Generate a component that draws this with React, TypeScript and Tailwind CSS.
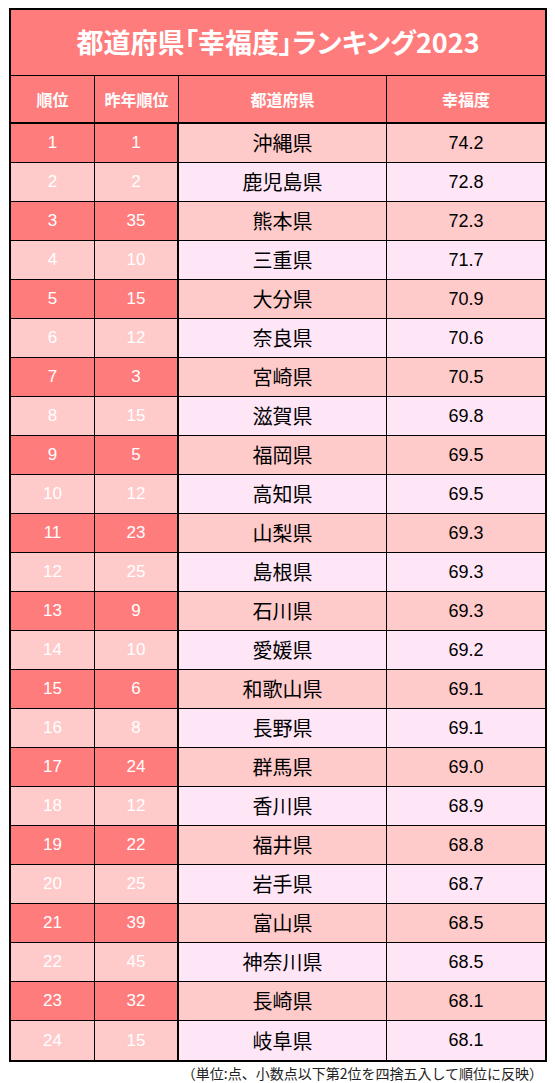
import React from 'react';

const rows: [number, number, string, string][] = [
    [1, 1, '沖縄県', '74.2'],
    [2, 2, '鹿児島県', '72.8'],
    [3, 35, '熊本県', '72.3'],
    [4, 10, '三重県', '71.7'],
    [5, 15, '大分県', '70.9'],
    [6, 12, '奈良県', '70.6'],
    [7, 3, '宮崎県', '70.5'],
    [8, 15, '滋賀県', '69.8'],
    [9, 5, '福岡県', '69.5'],
    [10, 12, '高知県', '69.5'],
    [11, 23, '山梨県', '69.3'],
    [12, 25, '島根県', '69.3'],
    [13, 9, '石川県', '69.3'],
    [14, 10, '愛媛県', '69.2'],
    [15, 6, '和歌山県', '69.1'],
    [16, 8, '長野県', '69.1'],
    [17, 24, '群馬県', '69.0'],
    [18, 12, '香川県', '68.9'],
    [19, 22, '福井県', '68.8'],
    [20, 25, '岩手県', '68.7'],
    [21, 39, '富山県', '68.5'],
    [22, 45, '神奈川県', '68.5'],
    [23, 32, '長崎県', '68.1'],
    [24, 15, '岐阜県', '68.1'],
];

const jp = { fontFamily: '"Noto Sans CJK JP", sans-serif' };
const num = { fontFamily: '"Liberation Sans", "Noto Sans CJK JP", sans-serif' };

export default function App() {
    return (
        <div className="w-[555px] h-[1083px] bg-white pt-2 pl-[9px]" style={jp}>
            <div className="w-[538px] border-2 border-black">
                {/* Title */}
                <div className="h-[66px] bg-[#ff7c7c] border-b border-black flex items-center justify-center">
                    <h1 className="text-white text-[27px] font-bold [font-feature-settings:'palt']">都道府県「幸福度」ランキング2023</h1>
                </div>

                {/* Header */}
                <div className="h-[48px] flex bg-[#ff7c7c] border-b-2 border-black text-white text-[16px] font-bold">
                    <div className="w-[84px] border-r border-black flex items-center justify-center">順位</div>
                    <div className="w-[84px] border-r border-black flex items-center justify-center">昨年順位</div>
                    <div className="w-[208px] border-r border-black flex items-center justify-center">都道府県</div>
                    <div className="flex-1 flex items-center justify-center">幸福度</div>
                </div>

                {/* Body */}
                {rows.map(([rank, prev, name, score], i) => {
                    const odd = i % 2 === 0;
                    const last = i === rows.length - 1;
                    return (
                        <div key={rank} className={`h-[39px] flex ${last ? '' : 'border-b border-black'}`}>
                            <div className={`w-[84px] border-r border-black flex items-center justify-center text-white text-[17px] ${odd ? 'bg-[#ff7c7c]' : 'bg-[#ffcaca]'}`} style={num}>{rank}</div>
                            <div className={`w-[84px] border-r-2 border-black flex items-center justify-center text-white text-[17px] ${odd ? 'bg-[#ff7c7c]' : 'bg-[#ffcaca]'}`} style={num}>{prev}</div>
                            <div className={`w-[208px] border-r border-black flex items-center justify-center text-black text-[20px] ${odd ? 'bg-[#ffcaca]' : 'bg-[#ffe6f7]'}`}>{name}</div>
                            <div className={`flex-1 flex items-center justify-center text-black text-[18px] ${odd ? 'bg-[#ffcaca]' : 'bg-[#ffe6f7]'}`} style={num}>{score}</div>
                        </div>
                    );
                })}
            </div>
            <p className="w-[538px] text-right pr-[4px] mt-[1px] text-[14px] text-[#222]">（単位:点、小数点以下第2位を四捨五入して順位に反映）</p>
        </div>
    );
}
